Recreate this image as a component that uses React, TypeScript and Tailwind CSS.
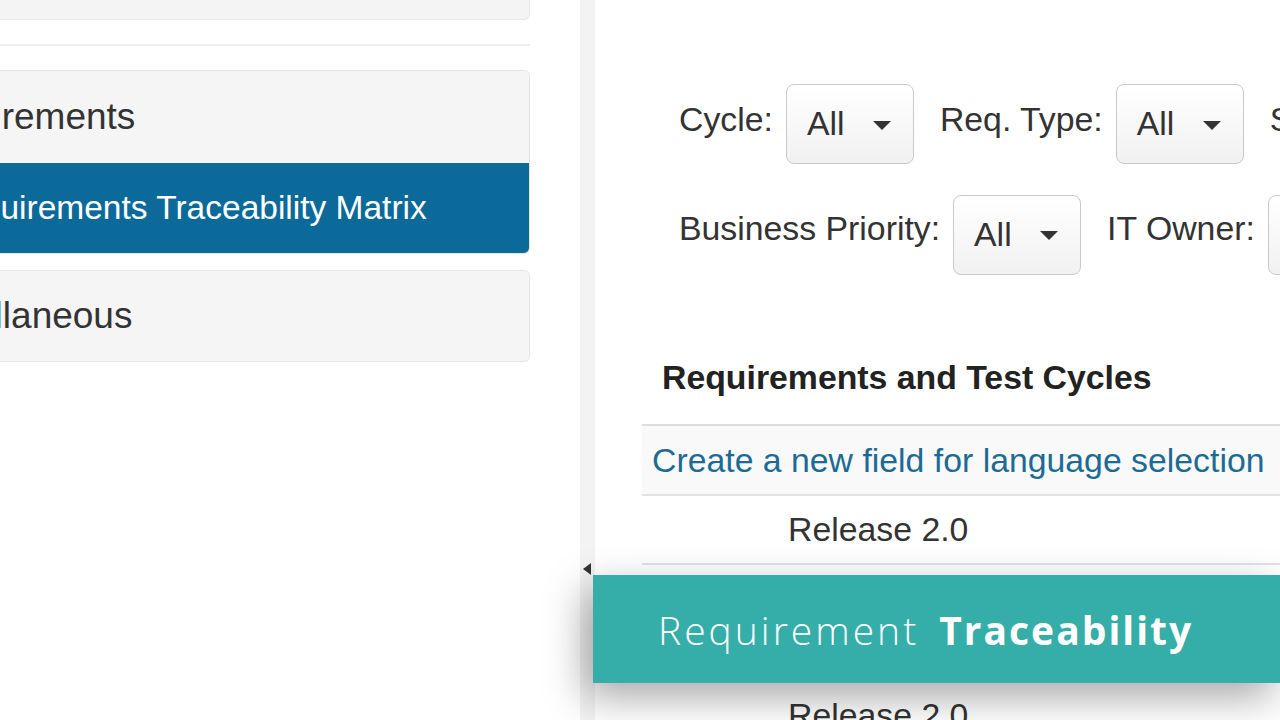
import React from 'react'

const font = "font-['Liberation_Sans',Arial,sans-serif]"

const Select: React.FC = () => (
    <div className="flex items-center justify-between w-[128px] h-[80px] pl-[20px] pr-[22px] border border-[#c9c9c9] rounded-[8px] bg-gradient-to-b from-white to-[#f1f1f1] text-[#333]">
        <span className="leading-none">All</span>
        <span className="mt-[2px] w-0 h-0 border-l-[9px] border-r-[9px] border-t-[9px] border-l-transparent border-r-transparent border-t-[#333]" />
    </div>
)

const App: React.FC = () => {
    return (
        <div className={`relative w-[1280px] h-[720px] overflow-hidden bg-white flex text-[33.8px] ${font}`}>
            {/* left menu */}
            <div className="w-[530px] shrink-0 overflow-hidden">
                <div className="h-[20px] bg-[#f4f4f4] border-b border-r border-[#e8e8e8] rounded-br-[6px]" />
                <div className="mt-[24px] h-[2px] bg-[#eeeeee]" />
                <div className="mt-[24px] border border-l-0 border-[#e4e4e4] rounded-r-[6px] overflow-hidden">
                    <div className="h-[92px] bg-[#f5f5f5] flex items-center text-[#333] text-[37px] whitespace-nowrap">
                        <span className="-ml-[95px]">Requirements</span>
                    </div>
                    <div className="h-[90px] bg-[#0b6a99] flex items-center text-white text-[33.5px] whitespace-nowrap">
                        <span className="-ml-[61px]">Requirements Traceability Matrix</span>
                    </div>
                </div>
                <div className="mt-[16px] h-[92px] bg-[#f5f5f5] border border-l-0 border-[#e6e6e6] rounded-r-[6px] flex items-center text-[#333] text-[37px] whitespace-nowrap">
                    <span className="-ml-[102px]">Miscellaneous</span>
                </div>
            </div>

            <div className="w-[50px] shrink-0" />

            {/* splitter */}
            <div className="relative w-[15px] shrink-0 bg-[#f3f3f3]">
                <span className="absolute left-[3px] top-[563px] w-0 h-0 border-t-[6px] border-b-[6px] border-r-[8px] border-t-transparent border-b-transparent border-r-[#333]" />
            </div>

            {/* report */}
            <div className="flex-1 pl-[47px] pt-[84px] text-[#333] whitespace-nowrap">
                <div className="flex items-center h-[80px] pl-[37px]">
                    <span className="mb-[10px]">Cycle:</span>
                    <div className="ml-[13px]"><Select /></div>
                    <span className="ml-[26px] mb-[10px]">Req. Type:</span>
                    <div className="ml-[13px]"><Select /></div>
                    <span className="ml-[26px] mb-[10px]">S</span>
                </div>
                <div className="flex items-center h-[81px] mt-[30px] pl-[37px]">
                    <span className="mb-[12px]">Business Priority:</span>
                    <div className="ml-[13px]"><Select /></div>
                    <span className="ml-[26px] mb-[12px]">IT Owner:</span>
                    <div className="ml-[13px]"><Select /></div>
                </div>

                <h2 className="mt-[82px] pl-[20px] h-[40px] leading-[40px] font-bold text-[#222]">Requirements and Test Cycles</h2>

                <div className="mt-[27px] border-t-2 border-[#dddddd]">
                    <div className="h-[70px] bg-[#f9f9f9] border-b-2 border-[#e2e2e2] pl-[10px] flex items-center">
                        <a className="text-[#1d6b94]">Create a new field for language selection</a>
                    </div>
                    <div className="h-[69px] border-b-2 border-[#e2e2e2] pl-[146px] flex items-center">
                        Release 2.0
                    </div>
                    <div className="h-[85px] border-b-2 border-[#e2e2e2] pl-[146px] flex items-center">
                        Release 2.0
                    </div>
                    <div className="h-[70px] pl-[146px] flex items-center pt-[60px]">
                        Release 2.0
                    </div>
                </div>
            </div>

            {/* title overlay */}
            <div className="absolute left-[593px] top-[575px] w-[687px] h-[108px] bg-[#35ada9] shadow-[-8px_14px_40px_rgba(0,0,0,0.35)] flex items-center pl-[65px] pt-[2px] text-white font-['Open_Sans',sans-serif] text-[39px] whitespace-nowrap">
                <span className="font-light tracking-[3px]">Requirement</span>
                <span className="ml-[20px] font-bold tracking-[2px]">Traceability</span>
            </div>
        </div>
    )
}

export default App
